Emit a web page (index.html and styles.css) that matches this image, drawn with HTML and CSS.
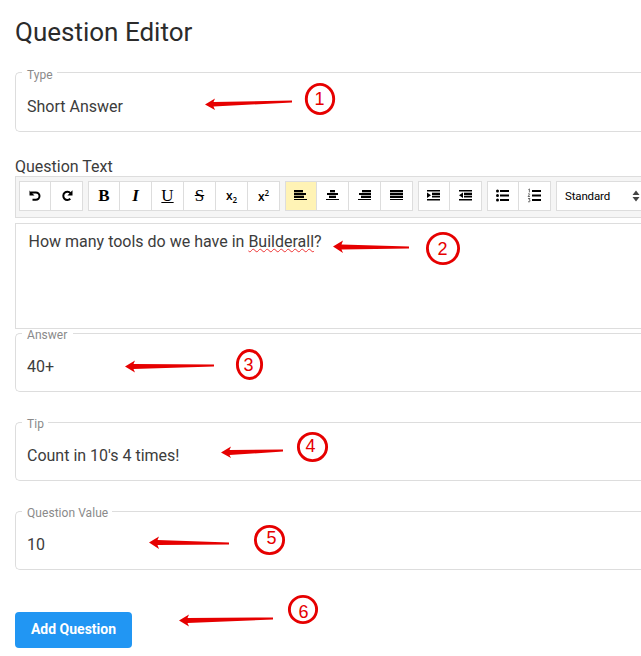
FILE: index.html
```
<!DOCTYPE html>
<html lang="en">
<head>
<meta charset="utf-8">
<title>Question Editor</title>
<link rel="stylesheet" href="styles.css">
</head>
<body>
<main class="page">
  <h1 class="title">Question Editor</h1>
  <fieldset class="field field-type"><legend><span>Type</span></legend><div class="value">Short Answer</div></fieldset>
  <div class="label">Question Text</div>
  <div class="toolbar">
    <div class="group">
      <button class="tool"><svg viewBox="0 0 16 16"><path d="M4 4.400H8.800A3.600 3.600 0 1 1 8.800 11.800H5.500" class="line"/><path d="M2.500 2.500V7.600H7.500Z"/></svg></button>
      <button class="tool"><svg viewBox="0 0 16 16"><path d="M11.500 5.200A4.100 4.100 0 1 0 11.300 10.800" class="line"/><path d="M13.500 2.300V7.400H8.400Z"/></svg></button>
    </div>
    <div class="group">
      <button class="tool serif bold">B</button>
      <button class="tool serif italic">I</button>
      <button class="tool serif under">U</button>
      <button class="tool serif strike">S</button>
      <button class="tool script"><span>x<small class="sub">2</small></span></button>
      <button class="tool script"><span>x<small class="sup">2</small></span></button>
    </div>
    <div class="group">
      <button class="tool active"><svg viewBox="0 0 16 16"><path d="M1 2h9v2H1zM1 5h12v2H1zM1 8h10v2H1zM1 11h13v1H1z"/><path class="soft" d="M1 4h9v1H1zM1 7h10v1H1z"/></svg></button>
      <button class="tool"><svg viewBox="0 0 16 16"><path d="M5 2h5v2H5zM2 5h11v2H2zM4 8h7v2H4zM1 11h13v1H1z"/><path class="soft" d="M5 4h5v1H5zM4 7h7v1H4z"/></svg></button>
      <button class="tool"><svg viewBox="0 0 16 16"><path d="M5 2h9v2H5zM2 5h12v2H2zM4 8h10v2H4zM1 11h13v1H1z"/><path class="soft" d="M5 4h9v1H5zM4 7h10v1H4z"/></svg></button>
      <button class="tool"><svg viewBox="0 0 16 16"><path d="M1 2h13v2H1zM1 5h13v2H1zM1 8h13v2H1zM1 11h13v1H1z"/><path class="soft" d="M1 4h13v1H1zM1 7h13v1H1z"/></svg></button>
    </div>
    <div class="group">
      <button class="tool"><svg viewBox="0 0 16 16"><path d="M1 2h13v1.500H1zM6 5h8v2H6zM6 8h8v1.500H6zM1 11h13v1.500H1zM1 4.500l4 2.700L1 10z"/><path class="soft" d="M6 4h8v1H6zM6 7h8v1H6z"/></svg></button>
      <button class="tool"><svg viewBox="0 0 16 16"><path d="M1 2h13v1.500H1zM6 5h8v2H6zM6 8h8v1.500H6zM1 11h13v1.500H1zM5 4.500L1 7.200 5 10z"/><path class="soft" d="M6 4h8v1H6zM6 7h8v1H6z"/></svg></button>
    </div>
    <div class="group">
      <button class="tool"><svg viewBox="0 0 16 16"><path d="M5 2h9v2H5zM5 6.500h9v2H5zM5 11h9v2H5z"/><circle cx="2.500" cy="3" r="1.500"/><circle cx="2.500" cy="7.500" r="1.500"/><circle cx="2.500" cy="12" r="1.500"/></svg></button>
      <button class="tool"><svg viewBox="0 0 16 16"><path d="M5 2h9v2H5zM5 6.500h9v2H5zM5 11h9v2H5z"/><path class="thin" d="M1.400 1.600l1-.7v3.500M1 6q1.800-.8 1.600.5L1 8.500h2M1 10.500h2L2 11.800q1.600.1 1 1.600-.6.8-2 .3"/></svg></button>
    </div>
    <div class="select"><span>Standard</span><svg viewBox="0 0 8 12"><path d="M4 .5L7.500 5H.5zM.5 7h7L4 11.500z"/></svg></div>
  </div>
  <div class="editor">How many tools do we have in <span class="misspelled">Builderall</span>?</div>
  <fieldset class="field field-answer"><legend class="wide"><span>Answer</span></legend><div class="value">40+</div></fieldset>
  <fieldset class="field"><legend><span>Tip</span></legend><div class="value">Count in 10's 4 times!</div></fieldset>
  <fieldset class="field"><legend><span>Question Value</span></legend><div class="value">10</div></fieldset>
  <button class="submit">Add Question</button>
</main>
<svg class="notes" viewBox="0 0 641 656">
  <g class="arrows">
    <path d="M205 104.500L215 98.500 213.500 102 292 100.500V102.500L213.500 106.500 215 110z"/>
    <path d="M333 246.500L343 240.500 341.500 244.500 409 246.500V248.500L341.500 249.500 343 253z"/>
    <path d="M125 366.500L135 360.500 133.500 364 214 364.500V366.500L133.500 369 135 372.500z"/>
    <path d="M221 452.500L231 446.500 229.500 450 283 449.500V451.500L229.500 455 231 458z"/>
    <path d="M149 542.500L159 536.500 157.500 540 229 542.500V544.500L157.500 545 159 549z"/>
    <path d="M179 620.500L189 614.500 187.500 618 273 617.500V619.500L187.500 623 189 626.500z"/>
  </g>
  <g class="rings">
    <ellipse cx="320" cy="99" rx="13.700" ry="14.600"/>
    <ellipse cx="443" cy="248.500" rx="15.600" ry="15.100"/>
    <ellipse cx="249.500" cy="364.500" rx="12.100" ry="14"/>
    <ellipse cx="312.500" cy="447" rx="14.100" ry="13.600"/>
    <ellipse cx="269.500" cy="540" rx="14.100" ry="13.600"/>
    <ellipse cx="303" cy="609.500" rx="13.600" ry="13.100"/>
  </g>
  <g class="nums">
    <text x="319.500" y="105">1</text><text x="442.500" y="255">2</text><text x="248.500" y="371">3</text>
    <text x="310.500" y="452">4</text><text x="271.500" y="544">5</text><text x="303.500" y="618">6</text>
  </g>
</svg>
</body>
</html>
```
FILE: styles.css
```
* { box-sizing: border-box; }
body { margin: 0; background: #fff; color: #3c3c3c; font-family: Roboto, sans-serif; }
.page { height: 656px; padding: 15px 0 0 15px; }
.title { margin: 0; height: 50px; font-size: 26px; font-weight: 400; line-height: 34px; color: #2b2b2b; }
.field { min-width: 0; height: 66px; margin: 0 0 23px; padding: 0 11px; border: 1px solid #ddd; border-right: 0; border-radius: 5px 0 0 5px; }
.field legend { height: 15px; padding: 0 4px 0 5px; margin-left: -5px; font-size: 12px; line-height: 15px; letter-spacing: .05px; color: #8a8a8a; }
.field legend.wide { padding-right: 6px; }
.field legend span { position: relative; top: 2px; }
.value { padding-top: 14px; font-size: 16px; line-height: 24px; }
.field-type { height: 67px; margin-bottom: 26px; }
.field-type .value { padding-top: 15px; }
.field-type legend span { top: 3px; }
.label { height: 18px; font-size: 16px; line-height: 18px; }
.toolbar { display: flex; gap: 5px; height: 42px; padding: 4px 0 4px 3px; border: 1px solid #ddd; border-right: 0; background: #f5f5f5; }
.group { display: flex; flex: none; height: 30px; border: 1px solid #ddd; background: #fff; }
.tool { display: flex; align-items: center; justify-content: center; width: 32px; height: 28px; padding: 0; border: 0; border-right: 1px solid #ddd; background: #fff; color: #000; }
.tool:first-child { width: 31px; }
.tool:last-child { width: 31px; border-right: 0; }
.tool svg { width: 16px; height: 16px; }
.line { fill: none; stroke: #000; stroke-width: 2; }
.thin { fill: none; stroke: #333; stroke-width: .7; }
.soft { fill-opacity: .3; }
.tool path.soft { fill: #000; }
.tool.active { background: #fff3b5; }
.tool.serif { font: 17px "Liberation Serif", serif; }
.tool.bold { font-weight: 700; }
.tool.italic { font-style: italic; font-weight: 700; }
.tool.under { text-decoration: underline; }
.tool.strike { text-decoration: line-through; }
.tool.script { font: 600 12px "Open Sans", sans-serif; }
.script small { font-size: 8px; }
.sub { vertical-align: -3px; }
.sup { vertical-align: 5px; }
.select { display: flex; flex: 1; min-width: 0; align-items: center; justify-content: space-between; height: 30px; padding: 0 1px 0 8px; border: 1px solid #ddd; border-right: 0; background: #fff; color: #000; font-size: 11.500px; }
.select span { letter-spacing: -.15px; }
.select svg { width: 8px; height: 12px; fill: #444; }
.editor { height: 106px; margin-top: 5px; padding: 6px 12.500px; border: 1px solid #ddd; border-right: 0; font-size: 16px; line-height: 24px; }
.misspelled { text-decoration: underline wavy #e33 1px; text-underline-offset: 1px; text-decoration-skip-ink: none; }
.field-answer { margin-top: -3px; }
.submit { display: block; width: 117px; height: 36px; margin-top: 42px; padding: 0 0 2px; border: 0; border-radius: 4px; background: #2196f3; color: #fff; font: 700 14px Roboto, sans-serif; }
.notes { position: absolute; top: 0; left: 0; width: 641px; height: 656px; pointer-events: none; }
.arrows { fill: #e60000; }
.rings { fill: none; stroke: #e60000; stroke-width: 2.900; }
.nums { fill: #e60000; font: 18px "Liberation Sans", sans-serif; text-anchor: middle; }
```
